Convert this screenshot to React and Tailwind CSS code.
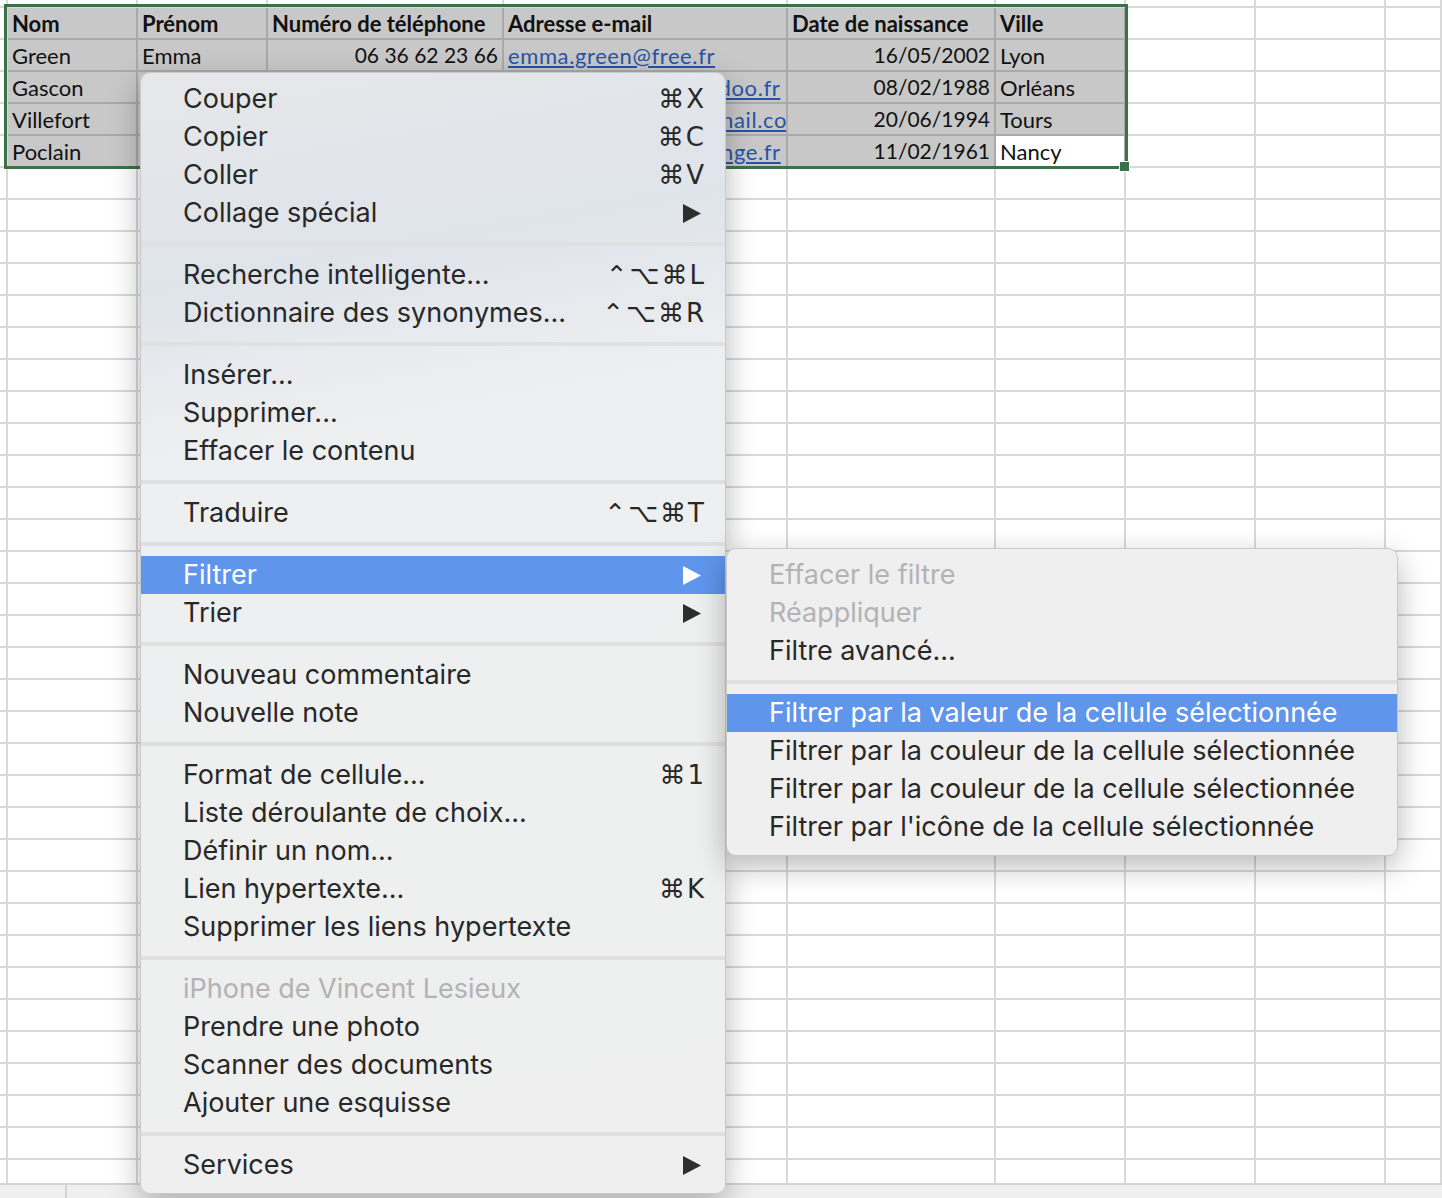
import React from 'react';

const colW = ['w-[8px]', 'w-[130px]', 'w-[130px]', 'w-[236px]', 'w-[284px]', 'w-[208px]', 'w-[130px]', 'w-[130px]', 'w-[130px]', 'flex-1'];

const header = ['Nom', 'Prénom', 'Numéro de téléphone', 'Adresse e-mail', 'Date de naissance', 'Ville'];
const people = [
    ['Green', 'Emma', '06 36 62 23 66', 'emma.green@free.fr', '16/05/2002', 'Lyon'],
    ['Gascon', 'Lucas', '06 12 45 78 90', 'lucas.gascons@wanadoo.fr', '08/02/1988', 'Orléans'],
    ['Villefort', 'Julie', '07 81 54 32 10', 'julie.villefort34@hotmail.com', '20/06/1994', 'Tours'],
    ['Poclain', 'Marc', '06 98 76 54 32', 'marc.poclain.61@orange.fr', '11/02/1961', 'Nancy'],
];

const mainMenu = [
    { label: 'Couper', sc: '⌘X' },
    { label: 'Copier', sc: '⌘C' },
    { label: 'Coller', sc: '⌘V' },
    { label: 'Collage spécial', arrow: true },
    'sep',
    { label: 'Recherche intelligente...', sc: '⌃⌥⌘L' },
    { label: 'Dictionnaire des synonymes...', sc: '⌃⌥⌘R' },
    'sep',
    { label: 'Insérer...' },
    { label: 'Supprimer...' },
    { label: 'Effacer le contenu' },
    'sep',
    { label: 'Traduire', sc: '⌃⌥⌘T' },
    'sep',
    { label: 'Filtrer', arrow: true, active: true },
    { label: 'Trier', arrow: true },
    'sep',
    { label: 'Nouveau commentaire' },
    { label: 'Nouvelle note' },
    'sep',
    { label: 'Format de cellule...', sc: '⌘1' },
    { label: 'Liste déroulante de choix...' },
    { label: 'Définir un nom...' },
    { label: 'Lien hypertexte...', sc: '⌘K' },
    { label: 'Supprimer les liens hypertexte' },
    'sep',
    { label: 'iPhone de Vincent Lesieux', disabled: true },
    { label: 'Prendre une photo' },
    { label: 'Scanner des documents' },
    { label: 'Ajouter une esquisse' },
    'sep',
    { label: 'Services', arrow: true },
];

const filterMenu = [
    { label: 'Effacer le filtre', disabled: true },
    { label: 'Réappliquer', disabled: true },
    { label: 'Filtre avancé...' },
    'sep',
    { label: 'Filtrer par la valeur de la cellule sélectionnée', active: true },
    { label: 'Filtrer par la couleur de la cellule sélectionnée' },
    { label: 'Filtrer par la couleur de la cellule sélectionnée' },
    { label: "Filtrer par l'icône de la cellule sélectionnée" },
];

function Arrow({ white }) {
    return (
        <svg width="18" height="19" viewBox="0 0 18 19" className="shrink-0">
            <path d="M0 0 L18 9.5 L0 19 Z" fill={white ? '#ffffff' : '#2e2e2e'} />
        </svg>
    );
}

function MenuList({ items }) {
    return items.map((it, i) => {
        if (it === 'sep') {
            return (
                <div key={i} className="h-[24px] flex items-center">
                    <div className="h-[4px] w-full bg-[#e0e0e0]" />
                </div>
            );
        }
        const color = it.active ? 'text-white bg-[#5f95eb]' : it.disabled ? 'text-[#b3b3b3]' : 'text-[#282828]';
        return (
            <div key={i} className={`h-[38px] flex items-center justify-between pl-[42px] pr-[21px] ${color}`}>
                <span className="whitespace-nowrap">{it.label}</span>
                {it.sc && <span className="tracking-[2px] font-['DejaVu_Sans',sans-serif] text-[26px] mr-[-2px]">{it.sc}</span>}
                {it.arrow && <span className="pr-[3px] flex"><Arrow white={it.active} /></span>}
            </div>
        );
    });
}

function Cell({ w, first, sel, active, align, bold, link, children }) {
    const bg = active ? 'bg-white border-[#a9a9a9]' : sel ? 'bg-[#c8c8c8] border-[#a9a9a9]' : 'border-[#d9d9d9]';
    const num = align === 'right';
    return (
        <div className={`${w} shrink-0 h-full border-r-2 border-b-2 ${bg} overflow-hidden whitespace-nowrap flex items-center ${first ? '' : 'px-[4px]'} ${num ? 'justify-end text-[21px]' : ''}`}>
            <span className={`${bold ? 'font-bold' : ''} ${link ? 'text-[#2754a4] underline underline-offset-[2px] decoration-[1.5px] tracking-[0.6px]' : 'text-[#111]'}`}>{children}</span>
        </div>
    );
}

function Sheet() {
    const rows = [];
    rows.push(
        <div key="top" className="flex h-[8px]">
            {colW.map((w, c) => <div key={c} className={`${w} shrink-0 h-full border-r-2 border-b-2 border-[#d9d9d9]`} />)}
        </div>
    );
    const data = [header, ...people];
    for (let r = 0; r < 37; r++) {
        const vals = data[r];
        rows.push(
            <div key={r} className="flex h-[32px]">
                {colW.map((w, c) => {
                    const inSel = vals && c >= 1 && c <= 6;
                    const v = inSel ? vals[c - 1] : '';
                    return (
                        <Cell
                            key={c}
                            w={w}
                            first={c === 0}
                            sel={inSel}
                            active={r === 4 && c === 6}
                            bold={r === 0}
                            align={r > 0 && (c === 3 || c === 5) ? 'right' : 'left'}
                            link={r > 0 && c === 4}
                        >
                            {v}
                        </Cell>
                    );
                })}
            </div>
        );
    }
    return <div className="flex-1 overflow-hidden">{rows}</div>;
}

export default function App() {
    return (
        <div className="relative w-[1442px] h-[1198px] overflow-hidden bg-white flex flex-col font-['Lato',sans-serif] text-[22px]">
            <Sheet />
            <div className="h-[15px] shrink-0 bg-[#efefef] border-t-2 border-[#d4d4d4] flex">
                <div className="w-[67px] border-r-2 border-[#d4d4d4]" />
            </div>

            {/* selection outline */}
            <div className="absolute left-[4px] top-[4px] w-[1124px] h-[165px] border-[3px] border-[#3a7149]" />
            <div className="absolute left-[1119px] top-[161px] w-[11px] h-[11px] bg-[#3a7149] border border-white" />

            {/* context menu */}
            <div className="absolute left-[140px] top-[72px] w-[586px] pt-[7px] pb-[9px] rounded-[10px] bg-[linear-gradient(170deg,#e6e7e9_0%,#dfe4eb_18%,#eeeff0_32%,#efefef_100%)] border border-[#c9c9c9] shadow-[0_10px_30px_rgba(0,0,0,0.28)] font-['Inter','DejaVu_Sans',sans-serif] text-[27px] overflow-hidden">
                <MenuList items={mainMenu} />
            </div>

            {/* filter submenu */}
            <div className="absolute left-[726px] top-[548px] w-[672px] pt-[7px] pb-[9px] rounded-[10px] bg-[#efefef] border border-[#c9c9c9] shadow-[0_10px_30px_rgba(0,0,0,0.28)] font-['Inter','DejaVu_Sans',sans-serif] text-[27px] overflow-hidden">
                <MenuList items={filterMenu} />
            </div>
        </div>
    );
}
